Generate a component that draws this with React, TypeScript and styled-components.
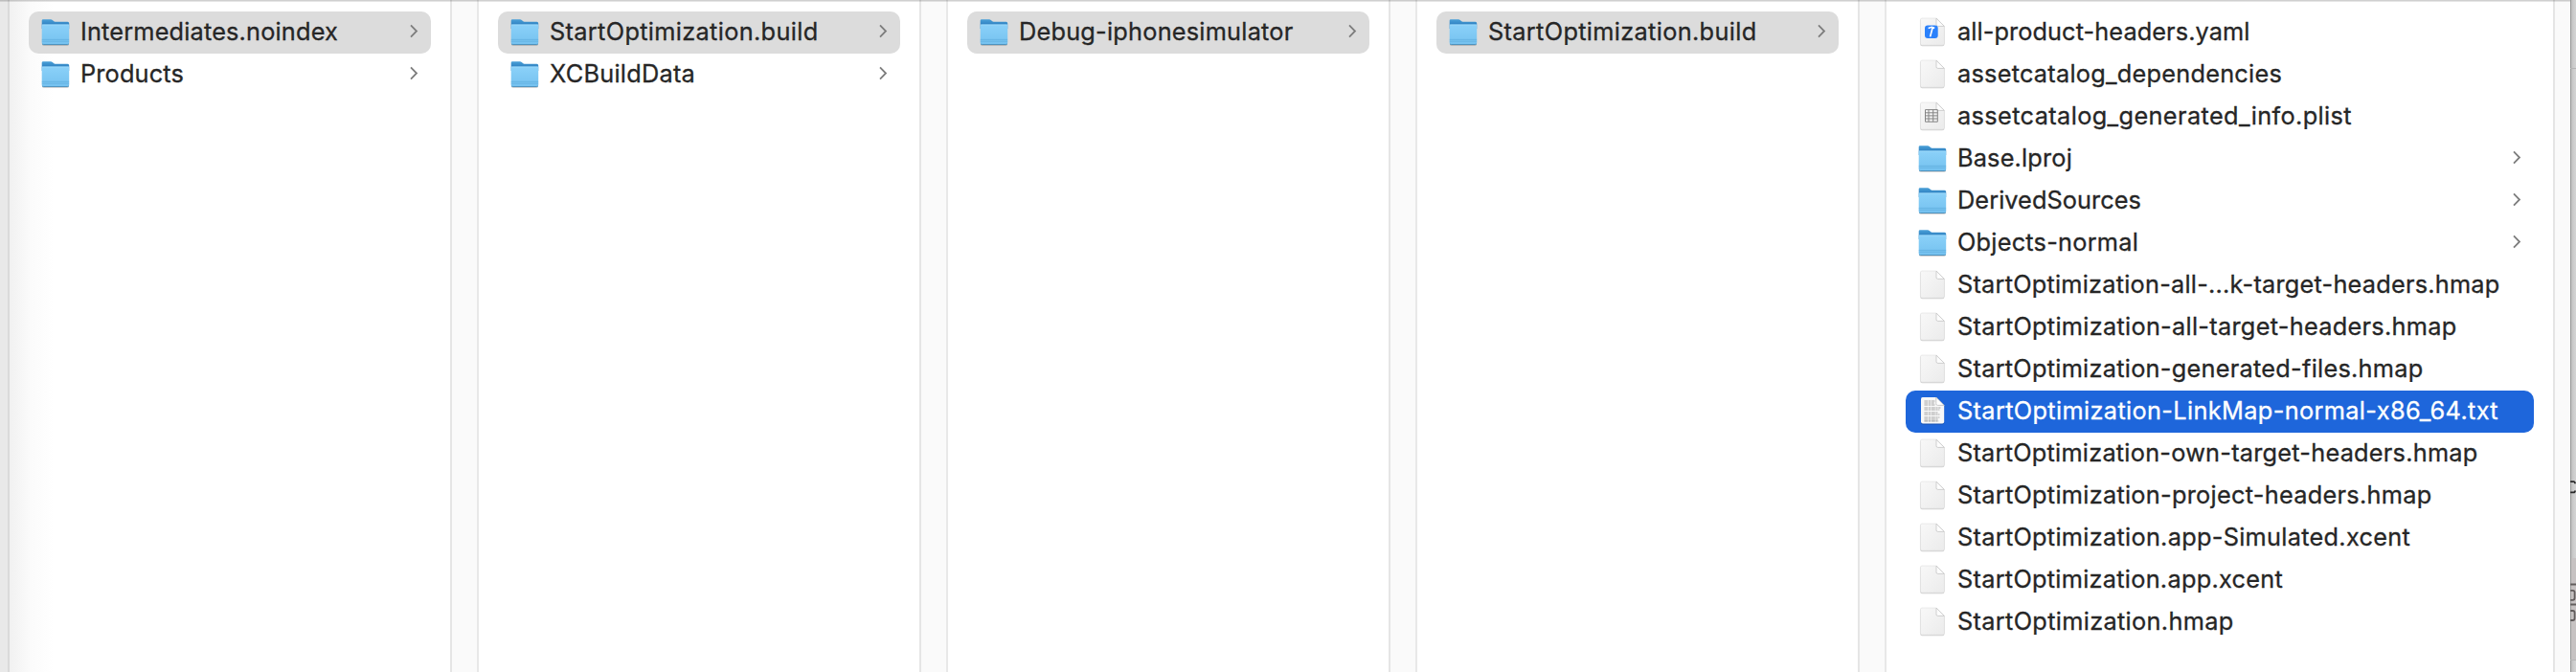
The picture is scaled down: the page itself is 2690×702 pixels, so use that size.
import React from 'react';
import styled, { createGlobalStyle } from 'styled-components';

type Kind = 'folder' | 'file' | 'yaml' | 'plist' | 'text';
type Item = { name: string; kind: Kind; tracking: number; state?: 'path' | 'active' };

const columns: Item[][] = [
  [
    { name: 'Intermediates.noindex', kind: 'folder', tracking: 0.179, state: 'path' },
    { name: 'Products', kind: 'folder', tracking: 0.16 },
  ],
  [
    { name: 'StartOptimization.build', kind: 'folder', tracking: 0.338, state: 'path' },
    { name: 'XCBuildData', kind: 'folder', tracking: 0.256 },
  ],
  [{ name: 'Debug-iphonesimulator', kind: 'folder', tracking: 0.229, state: 'path' }],
  [{ name: 'StartOptimization.build', kind: 'folder', tracking: 0.338, state: 'path' }],
  [
    { name: 'all-product-headers.yaml', kind: 'yaml', tracking: 0.09 },
    { name: 'assetcatalog_dependencies', kind: 'file', tracking: 0.247 },
    { name: 'assetcatalog_generated_info.plist', kind: 'plist', tracking: 0.382 },
    { name: 'Base.lproj', kind: 'folder', tracking: 0.183 },
    { name: 'DerivedSources', kind: 'folder', tracking: 0.069 },
    { name: 'Objects-normal', kind: 'folder', tracking: 0.235 },
    { name: 'StartOptimization-all-...k-target-headers.hmap', kind: 'file', tracking: 0.229 },
    { name: 'StartOptimization-all-target-headers.hmap', kind: 'file', tracking: 0.287 },
    { name: 'StartOptimization-generated-files.hmap', kind: 'file', tracking: 0.269 },
    { name: 'StartOptimization-LinkMap-normal-x86_64.txt', kind: 'text', tracking: 0.358, state: 'active' },
    { name: 'StartOptimization-own-target-headers.hmap', kind: 'file', tracking: 0.24 },
    { name: 'StartOptimization-project-headers.hmap', kind: 'file', tracking: 0.282 },
    { name: 'StartOptimization.app-Simulated.xcent', kind: 'file', tracking: 0.287 },
    { name: 'StartOptimization.app.xcent', kind: 'file', tracking: 0.271 },
    { name: 'StartOptimization.hmap', kind: 'file', tracking: 0.325 },
  ],
];

const GlobalStyle = createGlobalStyle`
  * { box-sizing: border-box; }
  body { margin: 0; background: #fff; font-family: Inter, Roboto, sans-serif; }
`;

const Finder = styled.div`
  position: relative;
  display: flex;
  width: 2690px;
  height: 702px;
  overflow: hidden;
  background: #fff;
`;

const TopRule = styled.div`
  position: absolute;
  inset: 0 6px auto 0;
  height: 2px;
  background: linear-gradient(rgba(0, 0, 0, 0.19) 50%, rgba(0, 0, 0, 0.1) 50%);
`;

const LeadingEdge = styled.div`
  flex: none;
  width: 10px;
  background: #e9e9e9;
  border-right: 2px solid #dadada;
`;

const Column = styled.div<{ $wide: boolean; $first: boolean }>`
  flex: none;
  width: ${(p) => (p.$wide ? 696 : 460)}px;
  padding: 12px 20px 0;
  background: ${(p) => (p.$first ? 'linear-gradient(90deg, #f1f1f1, #fbfbfb 22px, #fff 46px)' : '#fff')};
`;

const Gutter = styled.div<{ $last: boolean }>`
  flex: none;
  width: ${(p) => (p.$last ? 18 : 30)}px;
  background: #fafafa;
  border-left: 2px solid #e5e5e5;
  border-right: ${(p) => (p.$last ? 'none' : '2px solid #e8e8e8')};
`;

const Row = styled.div<{ $state?: 'path' | 'active' }>`
  display: flex;
  align-items: center;
  height: 44px;
  padding: 0 14px 3px 12px;
  border-radius: 10px;
  color: ${(p) => (p.$state === 'active' ? '#fff' : '#262626')};
  background: ${(p) => (p.$state === 'active' ? '#1e66db' : p.$state === 'path' ? '#dcdcdc' : 'transparent')};
`;

const RowIcon = styled.svg`
  flex: none;
  width: 32px;
  height: 32px;
  margin-top: 3px;
  overflow: visible;
`;

const Label = styled.span<{ $tracking: number }>`
  margin-left: 10px;
  font-size: 25.3px;
  line-height: 41px;
  letter-spacing: ${(p) => p.$tracking}px;
  white-space: nowrap;
  -webkit-text-stroke: 0.3px currentColor;
`;

const Chevron = styled.svg`
  flex: none;
  width: 8px;
  height: 13px;
  margin-left: auto;
  overflow: visible;
  fill: none;
  stroke: #7d7d7d;
  stroke-width: 1.8;
`;

const BackWindow = styled.div`
  flex: none;
  width: 6px;
  background: linear-gradient(90deg, #979797 0 1px, #bfbfbf 1px, #cfcfcf 4px, #d2d2d2);
`;

const BackDrawing = styled.svg`
  display: block;
  width: 6px;
  height: 702px;
  fill: none;
`;

function Icon({ kind }: { kind: Kind }) {
  if (kind === 'folder') {
    return (
      <RowIcon viewBox="0 0 32 32">
        <path d="M2.2 27h27.6v1.2q0 1.6-1.6 1.6H3.8q-1.6 0-1.6-1.6z" fill="#444" opacity=".3" />
        <path d="M1.7 3.6q0-1.3 1.3-1.3h8q1 0 1.8.8l1.2 1q.6.6 1.5.6h13.1q1.6 0 1.6 1.5V12H1.7z" fill="url(#tab)" />
        <path d="M1.7 8.4q0-.9 1-.9h26.5q1 0 1 .9V27q0 1.8-1.8 1.8H3.5q-1.8 0-1.8-1.8z" fill="url(#folder)" />
        <path d="M2.2 8h27.6" stroke="#a5dcfb" strokeWidth=".7" />
        <path d="M1.8 23.4h28.3M1.8 25.2h28.3" stroke="#62b0e0" strokeWidth=".8" />
        <path d="M2 27.8q.5.7 1.6.7h24.7q1.1 0 1.6-.7" fill="none" stroke="#4b8fba" strokeWidth=".9" />
      </RowIcon>
    );
  }
  if (kind === 'text') {
    return (
      <RowIcon viewBox="0 0 32 32">
        <path d="M5.6 2h14.2l8.4 8.4v17q0 2-2 2H6q-2 0-2-2V3.6Q4 2 5.6 2" fill="#0b2f70" opacity=".4" />
        <path d="M5.6 1h14.2l8.4 8.4v17.2q0 2-2 2H6q-2 0-2-2V2.8Q4 1 5.6 1" fill="#f8f8f8" />
        <path d="M7.4 5h11M7.4 7h10.4M7.4 9h11M7.4 12h17M7.4 14h16M7.4 17h14M7.4 19h16M7.4 22h16M7.4 24h14.6M7.4 25.9h15" stroke="#a6a6a6" strokeWidth="1.1" strokeDasharray="4 .6 2.2 .6" />
        <path d="M19.8 1v6.8q0 1.6 1.6 1.6h6.8z" fill="#fff" stroke="#b5b5b5" strokeWidth=".7" />
      </RowIcon>
    );
  }
  return (
    <RowIcon viewBox="0 0 32 32">
      <path d="M5 2h15l8.5 8.2V28q0 2.2-2.2 2.2H5.4q-2.2 0-2.2-2.2V3.6Q3.2 2 5 2" fill="#666" opacity=".3" />
      <path d="M5.2 1h14.9l8.3 8.4v17.8q0 2-2 2H5.4q-2 0-2-2V2.8Q3.4 1 5.2 1" fill="url(#paper)" stroke="#d9d9d9" strokeWidth=".5" />
      <path d="M20 1.2v6.6q0 1.6 1.6 1.6h6.7z" fill="#fdfdfd" stroke="#bdbdbd" strokeWidth=".7" />
      {kind === 'yaml' && (
        <>
          <rect x="8" y="8.5" width="13.7" height="13.4" rx="3" fill="#2b81fb" />
          <path d="m11.6 11.5 3.6-1.2 3 1.1M16 11.2 13.6 20.4" fill="none" stroke="#fff" strokeWidth="1.7" />
        </>
      )}
      {kind === 'plist' && (
        <path d="M8.5 8.6h12.8v12.6H8.5zM8.5 11.8h12.8M8.5 14.9h12.8M8.5 18h12.8M12 8.6v12.6M16.7 8.6v12.6" fill="none" stroke="#858585" strokeWidth="1" />
      )}
    </RowIcon>
  );
}

function Entry({ item }: { item: Item }) {
  return (
    <Row $state={item.state}>
      <Icon kind={item.kind} />
      <Label $tracking={item.tracking}>{item.name}</Label>
      {item.kind === 'folder' && (
        <Chevron viewBox="0 0 8 13"><path d="M1 .3 7 6.5 1 12.7" /></Chevron>
      )}
    </Row>
  );
}

export default function App() {
  return (
    <Finder>
      <GlobalStyle />
      {columns.map((items, i) => (
        <React.Fragment key={i}>
          {i === 0 && <LeadingEdge />}
          <Column $wide={i === 4} $first={i === 0}>
            {items.map((item) => <Entry key={item.name} item={item} />)}
          </Column>
          <Gutter $last={i === 4} />
        </React.Fragment>
      ))}
      <BackWindow>
        <BackDrawing viewBox="0 0 6 702">
          <defs>
            <linearGradient id="tab" x2="0" y2="1"><stop stopColor="#4aa0d8" /><stop offset=".6" stopColor="#2f80c0" /></linearGradient>
            <linearGradient id="folder" x2="0" y2="1"><stop stopColor="#8bd1f9" /><stop offset="1" stopColor="#74c1ef" /></linearGradient>
            <linearGradient id="paper" x2="1" y2="1"><stop stopColor="#f8f8f8" /><stop offset="1" stopColor="#ebebeb" /></linearGradient>
          </defs>
          <path d="M0 71.5h6M0 689.5h6" stroke="#b5b5b5" />
          <path d="M1 583h5v106H1z" fill="#c6c2c2" />
          <path d="M0 503.2h3.5q1.5 0 1.5 2M0 514.4h3.5q1.5 0 1.5-2" stroke="#2a2a2a" strokeWidth="1.8" />
          <path d="M0 610.5h6M0 631.5h6M0 616.8h2.6q2 0 2 2v6q0 2-2 2H0M0 638h2.6q2 0 2 2v6q0 2-2 2H0" stroke="#625e5e" strokeWidth="1.8" />
        </BackDrawing>
      </BackWindow>
      <TopRule />
    </Finder>
  );
}
